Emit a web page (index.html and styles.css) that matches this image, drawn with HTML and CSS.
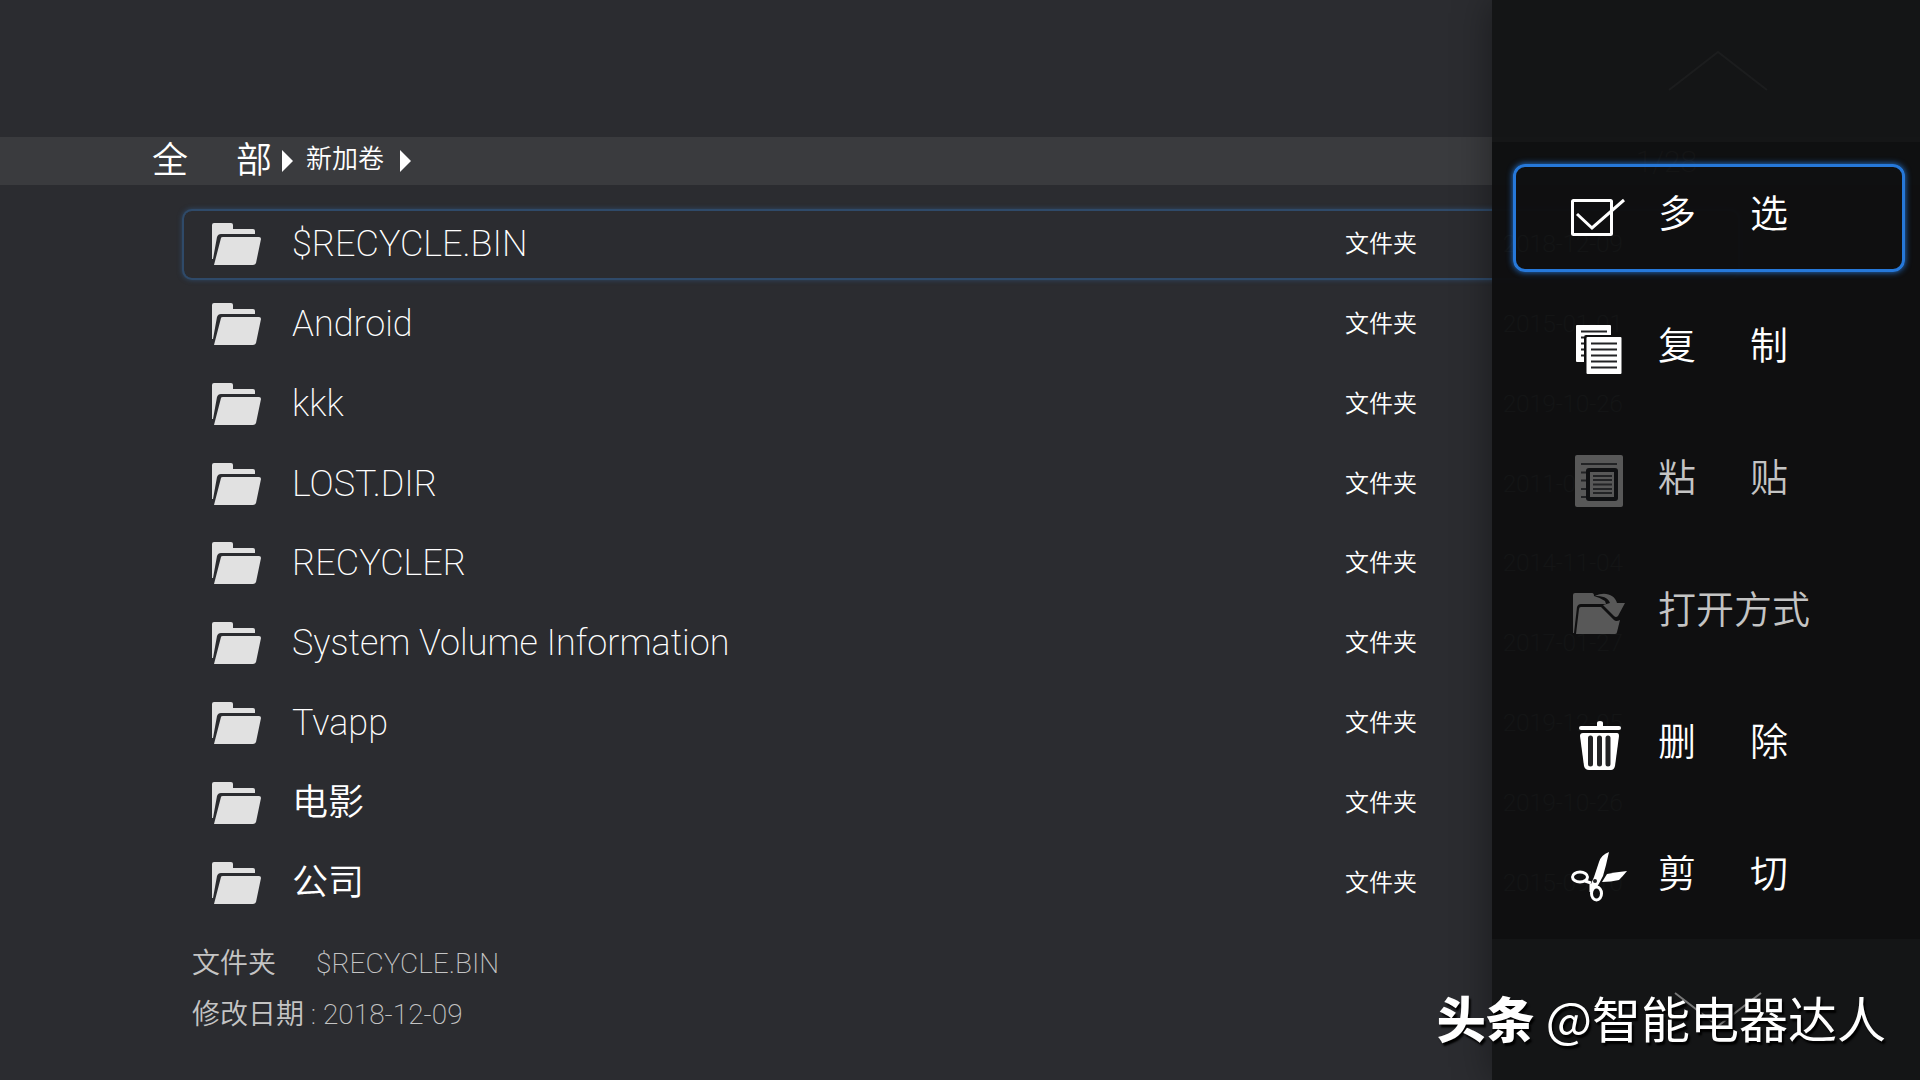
FILE: index.html
```html
<!DOCTYPE html>
<html lang="zh-CN">
<head>
  <meta charset="UTF-8">
  <meta name="viewport" content="width=device-width, initial-scale=1.0">
  <title>文件管理</title>
  <link rel="stylesheet" href="styles.css">
</head>
<body>
  <!-- Shared folder icon -->
  <svg class="defs" width="0" height="0">
    <symbol id="folder" viewBox="0 0 50 44">
      <path d="M0 3Q0 1 2 1H19Q21 1 21 3V7H41Q43 7 43 9V12H9Q6 12 5 15L1 37H0Z"/>
      <path d="M9 16Q9 15 11 15H47Q49 15 49 17L44 41Q43 43 41 43H2Z"/>
    </symbol>
  </svg>

  <header class="top">
    <nav class="breadcrumb">
      <a class="root" href="#">全 部</a>
      <span class="arrow"></span>
      <a class="crumb" href="#">新加卷</a>
      <span class="arrow"></span>
    </nav>
    <span class="count">1/28</span>
  </header>

  <main>
    <table class="files">
      <tbody id="file-list">
        <!-- Rows are added by the script below -->
      </tbody>
    </table>
  </main>

  <footer class="details">
    <p><span class="kind">文件夹</span><span class="thin">$RECYCLE.BIN</span></p>
    <p>修改日期 <span class="thin">: 2018-12-09</span></p>
  </footer>

  <aside class="panel">
    <div class="panel-end">
      <svg class="up" width="100" height="42" viewBox="0 0 100 42"><path d="M1 40L50 2L99 40"/></svg>
    </div>
    <div class="menu">
      <button class="item selected">
        <svg viewBox="0 0 60 60"><g class="line"><rect x="3.5" y="12.5" width="39" height="34" rx="1"/><path d="M8 26L23 40L55 12"/></g></svg>
        <span class="label pair">多 选</span>
      </button>
      <button class="item">
        <svg viewBox="0 0 60 60">
          <path d="M8 5H41Q42 5 42 6V15H17Q15 15 15 17V42H8Q7 42 7 41V6Q7 5 8 5Z"/>
          <rect x="17.5" y="17" width="35" height="37" rx="1"/>
          <path class="cut" d="M12 11.5H38M12 17.5H15M12 23.5H15M12 29.5H15M12 35.5H15M22 23.5H48M22 29.5H48M22 35.5H48M22 41.5H48M22 47.5H48"/>
        </svg>
        <span class="label pair">复 制</span>
      </button>
      <button class="item" disabled>
        <svg viewBox="0 0 60 60">
          <rect x="6" y="3" width="48" height="52" rx="2"/>
          <path class="cut" d="M12 12H48M12 20.5H18M12 28.5H18M12 37H18M12 45H18M24 24H43M24 28H43M24 32.5H43M24 37H43M24 41H43"/>
          <rect class="cut thick" x="19" y="18" width="28" height="29" rx="1"/>
        </svg>
        <span class="label pair">粘 贴</span>
      </button>
      <button class="item" disabled>
        <svg viewBox="0 0 60 60">
          <path d="M4 11Q4 9 6 9H23Q25 9 25 12Q32 14 36 17L37 20H12Q9 20 8 23L5 49H4Z"/>
          <path d="M10 25Q10 23 12 23H32L45 36Q47 38 51 36L48 48Q48 50 46 50H7Z"/>
          <path d="M26 12C36 7 46 11 48 19H56L49 32Q47 34 45 32L34 21L41 19C39 13 33 12 26 12Z"/>
        </svg>
        <span class="label">打开方式</span>
      </button>
      <button class="item">
        <svg viewBox="0 0 60 60">
          <rect x="10" y="10" width="42" height="4" rx="2"/>
          <path d="M28 11V7Q28 5 31 5Q34 5 34 7V11Z"/>
          <path d="M14 17H48Q50 17 50 20L46 50Q45 54 42 54H20Q16 54 15 50L11 20Q11 17 14 17Z"/>
          <path class="cut slot" d="M21.5 22V48M30.5 22V48M39 22V48"/>
        </svg>
        <span class="label pair">删 除</span>
      </button>
      <button class="item">
        <svg viewBox="0 0 60 60">
          <g class="line"><ellipse cx="11" cy="29" rx="7.5" ry="5"/><ellipse cx="27.5" cy="45.5" rx="5" ry="6.5"/><path d="M16 33L22 35M22 44V36"/></g>
          <path d="M40 4Q32 7 30 14L25 29L22 36L23 41L28 39Q31 34 34 28L37 17Z"/>
          <path d="M58 23Q48 24 38 26L33 34Q42 34 50 32Q54 28 58 23Z"/>
          <circle class="hole" cx="26" cy="33" r="2"/>
        </svg>
        <span class="label pair">剪 切</span>
      </button>
    </div>
    <div class="panel-end">
      <svg class="down" width="88" height="36" viewBox="0 0 88 36"><path d="M1 1L44 34L87 1"/></svg>
    </div>
  </aside>

  <div class="watermark"><strong>头条</strong> @智能电器达人</div>

  <script>
    const files = [
      ['$RECYCLE.BIN', '2018-12-09'],
      ['Android', '2015-01-01'],
      ['kkk', '2019-10-26'],
      ['LOST.DIR', '2011-01-20'],
      ['RECYCLER', '2014-11-04'],
      ['System Volume Information', '2017-01-27'],
      ['Tvapp', '2019-12-05'],
      ['电影', '2019-10-26'],
      ['公司', '2015-09-10']
    ];
    const fileList = document.getElementById('file-list');

    files.forEach(([name, date], index) => {
      const row = document.createElement('tr');
      const latin = /^[\x20-\x7e]+$/.test(name);
      if (index === 0) row.className = 'current';
      row.innerHTML = `
        <td class="name"><div><svg width="50" height="44"><use href="#folder"/></svg><span class="${latin ? 'thin' : ''}">${name}</span></div></td>
        <td class="type">文件夹</td>
        <td class="date">${date}</td>
      `;
      fileList.appendChild(row);
    });
  </script>
</body>
</html>
```
FILE: styles.css
```css
* {
  box-sizing: border-box;
}

body {
  margin: 0;
  min-height: 100vh;
  position: relative;
  overflow-x: hidden;
  background: #2b2c30;
  color: #fff;
  font-family: Roboto, 'Noto Sans CJK SC', sans-serif;
  font-weight: 350;
}

a {
  color: inherit;
  text-decoration: none;
}

.defs {
  position: absolute;
}

.thin {
  font-weight: 200;
}

/* Path bar */
.top {
  display: flex;
  align-items: center;
  justify-content: space-between;
  height: 48px;
  margin-top: 137px;
  padding: 0 223px 0 152px;
  background: #3a3b3e;
}

.breadcrumb {
  display: flex;
  align-items: center;
}

.root {
  width: 120px;
  font-size: 36px;
  line-height: 48px;
  text-align-last: justify;
}

.crumb {
  margin: 0 16px 0 13px;
  padding-bottom: 4px;
  font-size: 26px;
  line-height: 44px;
}

.arrow {
  margin-left: 10px;
  border-left: 11px solid #fff;
  border-top: 11px solid transparent;
  border-bottom: 11px solid transparent;
}

.crumb + .arrow {
  margin-left: 0;
}

.count {
  font-size: 30px;
  font-weight: 200;
}

/* File list */
main {
  padding: 13px 182px 0 184px;
}

.files {
  width: 100%;
  height: 731px;
  table-layout: fixed;
  border-collapse: separate;
  border-spacing: 0 13px;
}

.files td {
  padding: 0;
}

.current {
  border-radius: 8px;
  box-shadow: 0 0 0 2px #2f4a69, 0 0 5px 2px #2f4a69;
}

.name {
  font-size: 36px;
  line-height: 48px;
}

.name div {
  display: flex;
  align-items: center;
  gap: 30px;
  padding-left: 28px;
}

.name svg {
  fill: #e1e1e1;
}

.type {
  width: 158px;
  font-size: 24px;
  line-height: 48px;
}

.date {
  width: 235px;
  font-size: 24px;
  font-weight: 200;
}

.details {
  padding: 9px 192px 24px;
  color: #c4c4c4;
  font-size: 28px;
  line-height: 51px;
}

.details p {
  margin: 0;
}

.kind {
  margin-right: 40px;
}

/* Side menu, slides over the list */
.panel {
  position: absolute;
  top: 0;
  right: 0;
  bottom: 0;
  width: 428px;
  display: flex;
  flex-direction: column;
  background: rgba(20, 21, 22, 0.97);
  box-shadow: 0 0 36px rgba(0, 0, 0, 0.4);
}

.panel-end {
  flex: 1 0 141px;
  display: flex;
  justify-content: center;
  align-items: center;
  padding-left: 24px;
}

.panel-end svg {
  fill: none;
  stroke: #1c1d1e;
  stroke-width: 2;
}

.panel-end .down {
  margin-top: 2px;
  stroke: #777;
}

.menu {
  flex: none;
  display: flex;
  flex-direction: column;
  gap: 24px;
  padding: 22px 15px 7px 21px;
  background: rgba(0, 0, 0, 0.25);
}

.item {
  display: flex;
  align-items: center;
  gap: 29px;
  height: 108px;
  padding: 0 0 0 53px;
  border: 3px solid transparent;
  border-radius: 12px;
  background: none;
  color: #fff;
  font: inherit;
  font-size: 38px;
}

.item.selected {
  border-color: #2678d9;
  box-shadow: 0 0 6px #2678d9;
}

.item svg {
  width: 60px;
  height: 60px;
  fill: #fff;
}

.item:disabled {
  color: #c4c4c4;
}

.item:disabled svg {
  fill: #585858;
}

.item .line {
  fill: none;
  stroke: #fff;
  stroke-width: 3;
}

.item .cut {
  fill: none;
  stroke: #222325;
  stroke-width: 2;
}

.item .thick {
  stroke: #101113;
  stroke-width: 4;
}

.item .slot {
  stroke-width: 5;
  stroke-linecap: round;
}

.item .hole {
  fill: #222325;
}

.label {
  padding-bottom: 8px;
  line-height: 48px;
}

.pair {
  width: 130px;
  text-align-last: justify;
}

.watermark {
  position: absolute;
  right: 34px;
  bottom: 27px;
  font-family: 'Noto Sans CJK SC', sans-serif;
  font-size: 49px;
  font-weight: 400;
  line-height: 72px;
  text-shadow: 2px 3px 2px #000;
}

.watermark strong {
  font-weight: 900;
}
```
